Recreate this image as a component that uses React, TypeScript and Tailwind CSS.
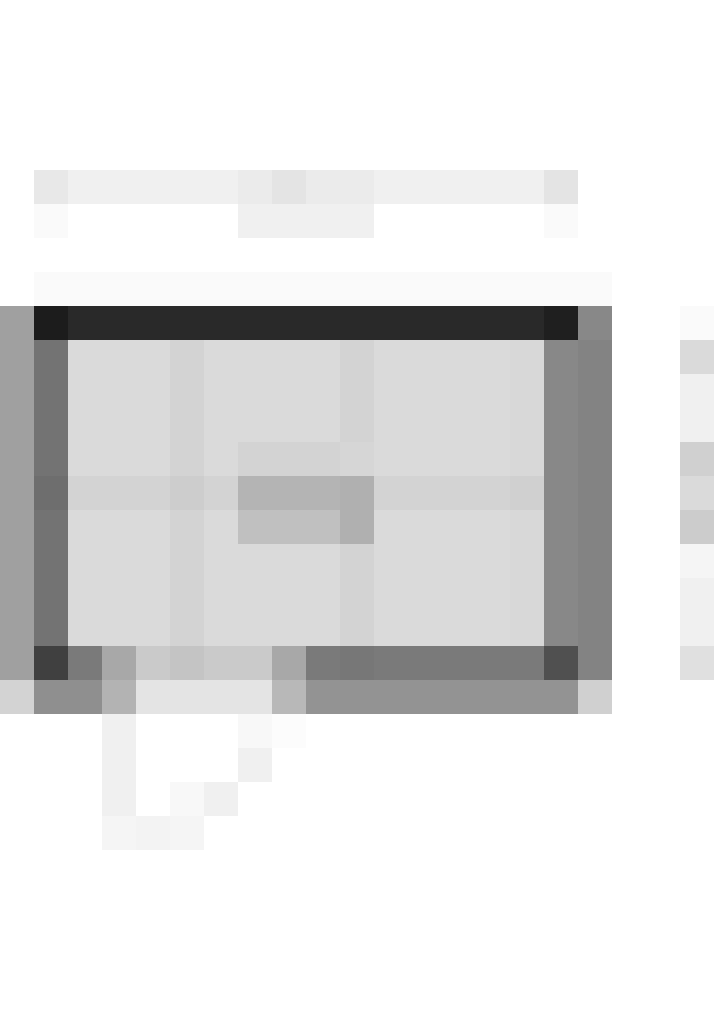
import React from 'react';

// one letter per 34px tile, full class names so tailwind picks them up
const palette: Record<string, string> = {
  '.': 'bg-white',
  A: 'bg-[#fafafa]',
  B: 'bg-[#f0f0f0]',
  C: 'bg-[#ebebeb]',
  D: 'bg-[#e4e4e4]',
  E: 'bg-[#292929]',
  F: 'bg-[#1c1c1c]',
  G: 'bg-[#a0a0a0]',
  H: 'bg-[#737373]',
  I: 'bg-[#dadada]',
  J: 'bg-[#d3d3d3]',
  K: 'bg-[#888888]',
  L: 'bg-[#838383]',
  M: 'bg-[#cdcdcd]',
  N: 'bg-[#b4b4b4]',
  O: 'bg-[#c0c0c0]',
  P: 'bg-[#404040]',
  Q: 'bg-[#7a7a7a]',
  R: 'bg-[#a8a8a8]',
  S: 'bg-[#cacaca]',
  T: 'bg-[#c4c4c4]',
  U: 'bg-[#777777]',
  V: 'bg-[#505050]',
  W: 'bg-[#b0b0b0]',
  Y: 'bg-[#8f8f8f]',
  Z: 'bg-[#b3b3b3]',
  a: 'bg-[#939393]',
  b: 'bg-[#d0d0d0]',
  c: 'bg-[#b8b8b8]',
  d: 'bg-[#e0e0e0]',
  e: 'bg-[#f5f5f5]',
  f: 'bg-[#f8f8f8]',
  g: 'bg-[#f3f3f3]',
  h: 'bg-[#fcfcfc]',
  i: 'bg-[#d8d8d8]',
  j: 'bg-[#e8e8e8]',
  k: 'bg-[#cccccc]',
  l: 'bg-[#1f1f1f]',
  m: 'bg-[#6e6e6e]',
  n: 'bg-[#d6d6d6]',
};

const blank = '.....................';

const rows: string[] = [
  blank,
  blank,
  blank,
  blank,
  blank,
  '.jBBBBBCDCCBBBBBD....',
  '.A.....BBBB.....A....',
  blank,
  '.AAAAAAAAAAAAAAAAA...',
  'GFEEEEEEEEEEEEEElK..A',
  'GHIIIJIIIIJIIIIiKL..I',
  'GHIIIJIIIIJIIIIiKL..B',
  'GHIIIJIIIIJIIIIiKL..B',
  'GHIIIJIJJJnIIIIiKL..b',
  'GmJJJMJNNNWJJJJbKL..I',
  'GHIIIJIOOOWIIIIiKL..k',
  'GHIIIJIIIIJIIIIiKL..e',
  'GHIIIJIIIIJIIIIiKL..B',
  'GHIIIJIIIIJIIIIiKL..B',
  'GPQRSTSSRQUQQQQQVL..d',
  'JYYZDDDDcaaaaaaaab...',
  '...B...fh............',
  '...B...B.............',
  '...B.fB..............',
  '...ege...............',
  blank,
  blank,
  blank,
  blank,
  blank,
];

function Tile({ code }: { code: string }) {
  return <div className={palette[code] ?? 'bg-white'} />;
}

export default function App() {
  return (
    <div className="w-[720px] h-[1018px] overflow-hidden bg-white">
      <div className="grid grid-cols-[repeat(21,34px)] auto-rows-[34px]">
        {rows.map((row, r) =>
          row.split('').map((code, c) => <Tile key={`${r}-${c}`} code={code} />)
        )}
      </div>
    </div>
  );
}
